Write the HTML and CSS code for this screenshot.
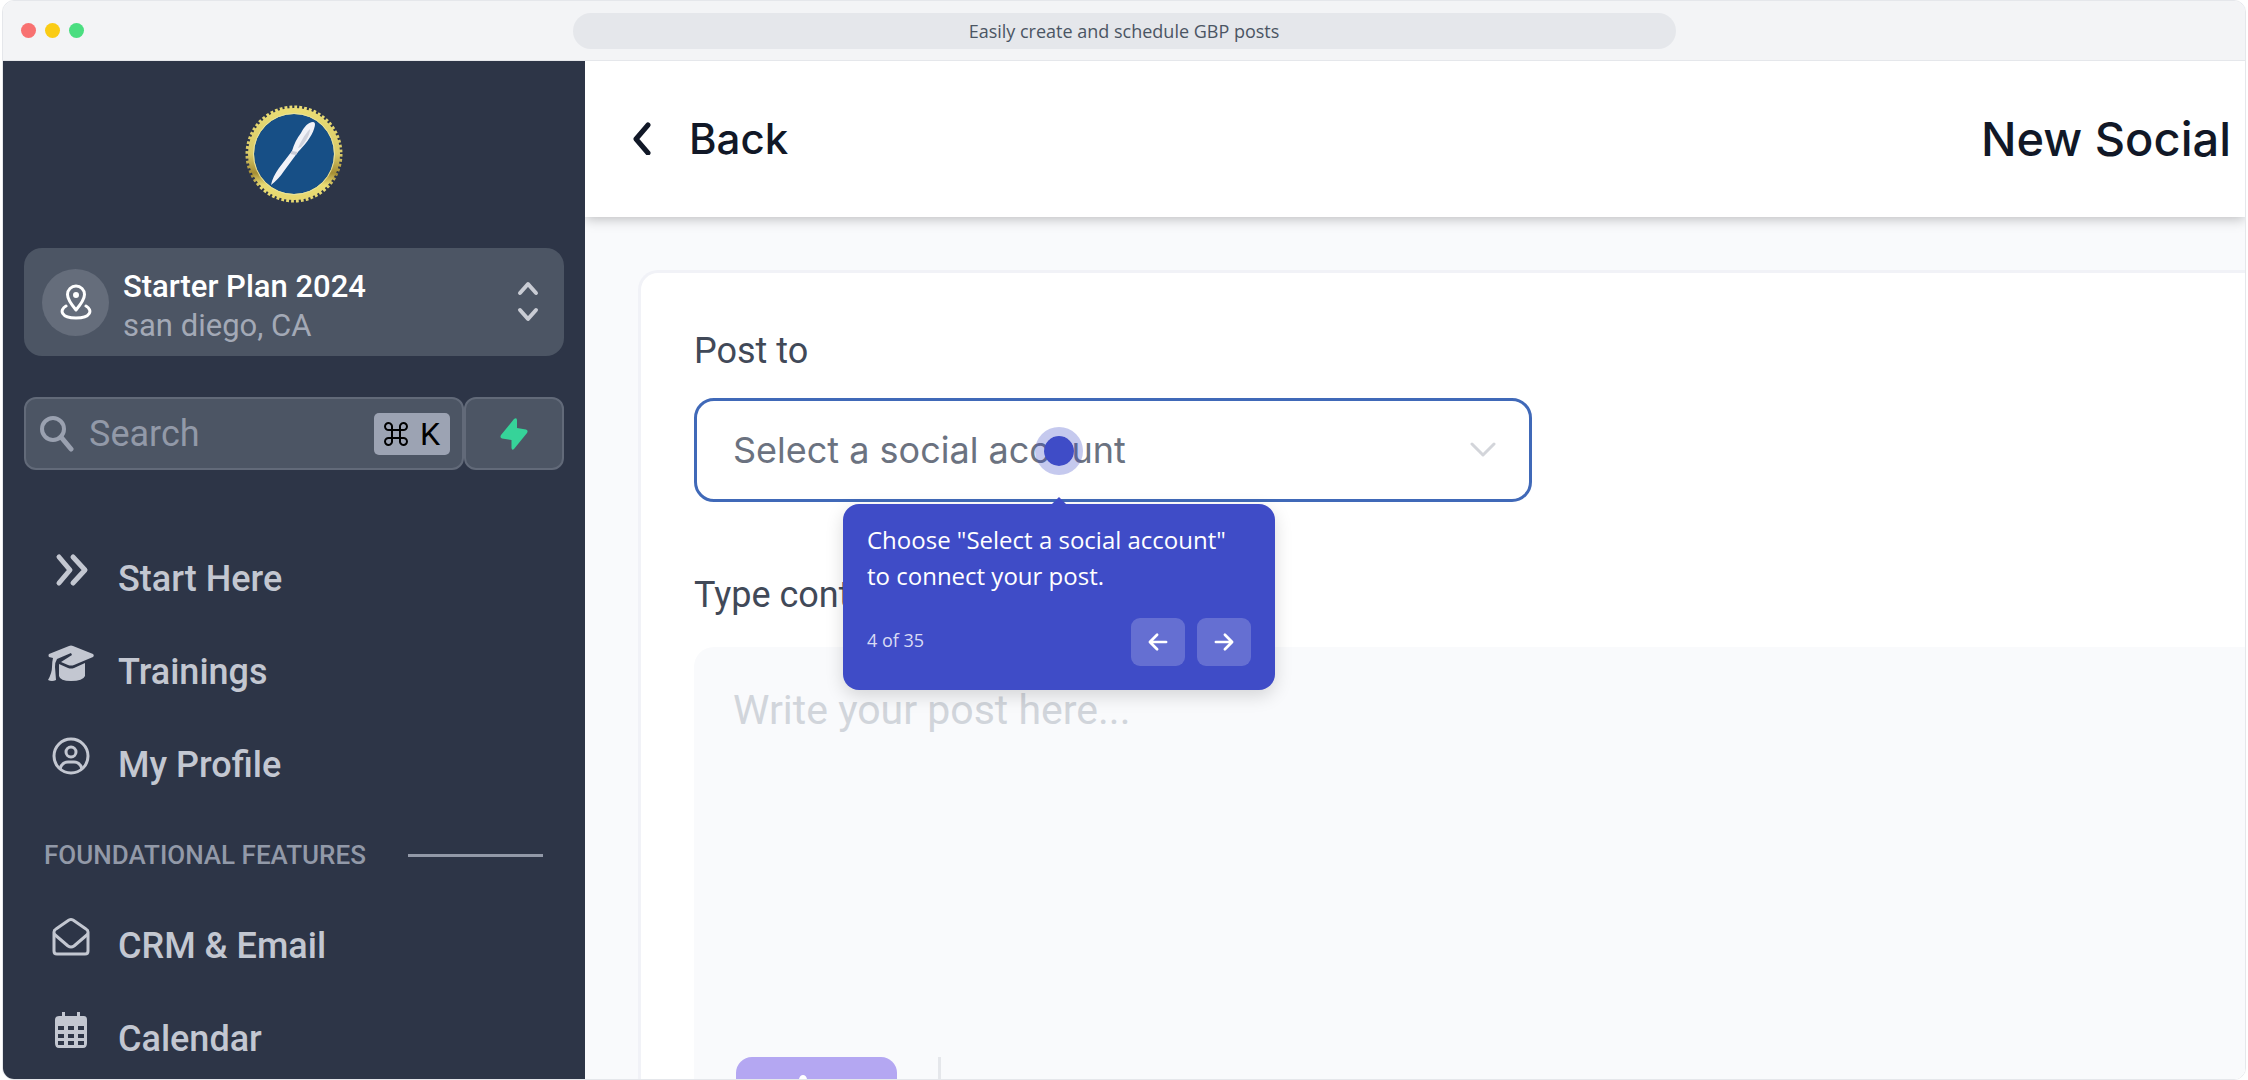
FILE: index.html
```
<!DOCTYPE html>
<html lang="en">
<head>
  <meta charset="UTF-8">
  <meta name="viewport" content="width=device-width, initial-scale=1.0">
  <title>Easily create and schedule GBP posts</title>
  <link rel="stylesheet" href="styles.css">
</head>
<body>
  <div class="window">
    <header class="title-bar">
      <div class="dots">
        <span class="dot dot-red"></span>
        <span class="dot dot-yellow"></span>
        <span class="dot dot-green"></span>
      </div>
      <div class="title-pill">Easily create and schedule GBP posts</div>
    </header>

    <div class="app">
      <aside class="sidebar">
        <svg class="logo" viewBox="0 0 100 100" aria-hidden="true">
          <defs>
            <linearGradient id="gold" x1="0" y1="0" x2="0" y2="1">
              <stop offset="0" stop-color="#e9dc74"/>
              <stop offset="0.5" stop-color="#d9ca68"/>
              <stop offset="0.72" stop-color="#a58d34"/>
              <stop offset="0.86" stop-color="#e9dc74"/>
              <stop offset="1" stop-color="#e6d870"/>
            </linearGradient>
          </defs>
          <circle cx="50" cy="50" r="46.500" fill="none" stroke="url(#gold)" stroke-width="4" stroke-dasharray="2.800 2.069"/>
          <circle cx="50" cy="50" r="43" fill="#174f86" stroke="url(#gold)" stroke-width="6"/>
          <circle cx="50" cy="50" r="40.500" fill="none" stroke="#e8e3a0" stroke-width="1"/>
          <path d="M27 81 C28 75 31 70 35 64 L48 47 C50 40 53 34 57 29 C60 23 64 18 69 18 C72 18 71 22 70 25 C68 32 60 42 54 48 L40 67 C36 73 32 77 27 81Z" fill="#f1f2f8"/>
          <path d="M54 44 C57 38 60 31 66 25 C66 31 62 37 57 43Z" fill="#d0d2dc"/>
          <path d="M48 47 L54 48 L52 51 L46 50Z" fill="#c9cbd6"/>
        </svg>

        <button type="button" class="plan">
          <span class="plan-icon">
            <svg viewBox="0 0 32 36" fill="none" stroke="#fff" stroke-width="3" stroke-linecap="round" stroke-linejoin="round" aria-hidden="true">
              <path d="M16 26 C11 20 7.500 15.500 7.500 10.500 A8.500 8.500 0 0 1 24.500 10.500 C24.500 15.500 21 20 16 26Z"/>
              <circle cx="16" cy="11" r="1.500" fill="#fff"/>
              <path d="M6 22 C-1 26 1 34 16 34 C31 34 33 26 26 22"/>
            </svg>
          </span>
          <span class="plan-text">
            <span class="plan-name">Starter Plan 2024</span>
            <span class="plan-place">san diego, CA</span>
          </span>
          <svg class="plan-arrows" viewBox="0 0 22 44" fill="none" stroke="#c9ccd4" stroke-width="4" stroke-linecap="round" stroke-linejoin="round" aria-hidden="true">
            <path d="M3 13 L11 4 L19 13 M3 30 L11 39 L19 30"/>
          </svg>
        </button>

        <div class="search-row">
          <label class="search">
            <svg class="search-icon" viewBox="0 0 34 38" fill="none" stroke="#9aa1b0" stroke-width="4" stroke-linecap="round" aria-hidden="true">
              <circle cx="13" cy="14" r="11"/>
              <path d="M21 22 L31 34" stroke-width="5"/>
            </svg>
            <input class="search-input" type="text" placeholder="Search" aria-label="Search">
            <kbd class="shortcut">
              <svg class="command-icon" viewBox="0 0 24 24" fill="none" stroke="#000" stroke-width="2" aria-hidden="true">
                <path d="M8 8 H16 V16 H8Z M8 8 H5 A3.500 3.500 0 1 1 8 5Z M16 8 V5 A3.500 3.500 0 1 1 19 8Z M16 16 H19 A3.500 3.500 0 1 1 16 19Z M8 16 V19 A3.500 3.500 0 1 1 5 16Z"/>
              </svg>
              <span>K</span>
            </kbd>
          </label>
          <button type="button" class="quick" aria-label="Quick actions">
            <svg viewBox="0 0 28 32" fill="#36d399" aria-hidden="true">
              <path d="M14 1 Q17 -1 17 2.500 L17 10 L26 11.500 Q28.500 12.500 27 15 L14 31 Q12 33 11.500 30 L11.500 22 L2 20.500 Q-0.500 19.500 1 17Z"/>
            </svg>
          </button>
        </div>

        <nav class="menu">
          <a class="menu-item" href="#">
            <svg viewBox="0 0 46 46" fill="none" stroke="currentColor" stroke-width="5" stroke-linecap="round" stroke-linejoin="round" aria-hidden="true">
              <path d="M11 10 L22 23 L11 36 M25 10 L37 23 L25 36"/>
            </svg>
            <span>Start Here</span>
          </a>
          <a class="menu-item" href="#">
            <svg viewBox="0 0 46 46" fill="currentColor" aria-hidden="true">
              <path d="M1 14 L21 6 Q23 5 25 6 L45 14 Q46.500 15.500 45 17 L26 25 Q23 26 20 25 L13 22 L24 15 L23 13 L9 19 Q7 22 7 27 L8 40 Q4 42 0 40 Q4 33 4 27 Q4 22 5 18 L1 17 Q0 15.500 1 14Z"/>
              <path d="M11 24 L20 28 Q23 29 26 28 L37 23 L37 36 Q35 41 23 41 Q12 41 11 36Z"/>
            </svg>
            <span>Trainings</span>
          </a>
          <a class="menu-item" href="#">
            <svg viewBox="0 0 46 46" fill="none" stroke="currentColor" stroke-width="3" aria-hidden="true">
              <circle cx="23" cy="23" r="17"/>
              <circle cx="23" cy="19" r="5"/>
              <path d="M12 36 Q14 29 20 29 H26 Q32 29 34 36"/>
            </svg>
            <span>My Profile</span>
          </a>
          <h2 class="menu-heading">FOUNDATIONAL FEATURES</h2>
          <a class="menu-item" href="#">
            <svg viewBox="0 0 46 46" fill="none" stroke="currentColor" stroke-width="3" stroke-linejoin="round" aria-hidden="true">
              <path d="M6 18 Q6 16 8 15 L21 6 Q23 5 25 6 L38 15 Q40 16 40 18 V37 Q40 40 37 40 H9 Q6 40 6 37Z"/>
              <path d="M6 20 L20 32 Q23 34 26 32 L40 20"/>
            </svg>
            <span>CRM &amp; Email</span>
          </a>
          <a class="menu-item" href="#">
            <svg viewBox="0 0 46 46" aria-hidden="true">
              <path fill="currentColor" fill-rule="evenodd" d="M14 5 H17 V9 H29 V5 H32 V9 H36 Q39 9 39 13 V36 Q39 41 35 41 H11 Q7 41 7 36 V13 Q7 9 11 9 H14Z M10 19 V23 H16 V19Z M20 19 V23 H26 V19Z M30 19 V23 H36 V19Z M10 27 V31 H16 V27Z M20 27 V31 H26 V27Z M30 27 V31 H36 V27Z M10 34 V38 H16 V34Z M20 34 V38 H26 V34Z M30 34 V38 H36 V34Z"/>
            </svg>
            <span>Calendar</span>
          </a>
        </nav>
      </aside>

      <main class="content">
        <div class="page-header">
          <button type="button" class="back">
            <svg viewBox="0 0 20 34" fill="none" stroke="currentColor" stroke-width="5" stroke-linecap="round" stroke-linejoin="round" aria-hidden="true">
              <path d="M16 4 L4 18 L16 32"/>
            </svg>
            <span>Back</span>
          </button>
          <h1 class="page-title">New Social</h1>
        </div>

        <form class="card">
          <label class="field-label" for="account">Post to</label>
          <div class="select-wrap">
            <select class="account" id="account">
              <option>Select a social account</option>
            </select>
            <svg class="select-arrow" viewBox="0 0 26 18" fill="none" stroke="#d3d5da" stroke-width="3" stroke-linecap="round" stroke-linejoin="round" aria-hidden="true">
              <path d="M2 3 L13 14 L24 3"/>
            </svg>

            <!-- tour step anchored to the select -->
            <div class="tour">
              <span class="hotspot"></span>
              <div class="tooltip">
                <p class="tooltip-text">Choose "Select a social account" to connect your post.</p>
                <div class="tooltip-footer">
                  <span class="step">4 of 35</span>
                  <button type="button" class="step-button" aria-label="Previous">
                    <svg viewBox="0 0 20 20" aria-hidden="true"><path d="M19 10 H2 M9 2 L1 10 L9 18"/></svg>
                  </button>
                  <button type="button" class="step-button" aria-label="Next">
                    <svg viewBox="0 0 20 20" aria-hidden="true"><path d="M1 10 H18 M11 2 L19 10 L11 18"/></svg>
                  </button>
                </div>
              </div>
            </div>
          </div>

          <label class="field-label" for="post">Type content</label>
          <div class="editor">
            <textarea class="post" id="post" placeholder="Write your post here..."></textarea>
            <div class="toolbar">
              <button type="button" class="generate" aria-label="Generate">
                <svg viewBox="0 0 32 32" fill="#fff" aria-hidden="true"><path d="M16 0 Q19 0 20 4 Q22 10 28 12 Q32 14 32 16 Q32 18 28 20 Q22 22 20 28 Q19 32 16 32 Q13 32 12 28 Q10 22 4 20 Q0 18 0 16 Q0 14 4 12 Q10 10 12 4 Q13 0 16 0Z"/></svg>
              </button>
              <span class="divider"></span>
            </div>
          </div>
        </form>
      </main>
    </div>
  </div>
</body>
</html>
```
FILE: styles.css
```
* {
  box-sizing: border-box;
}

body {
  margin: 0;
  height: 100vh;
  padding: 0 2px;
  overflow: hidden;
  background: #fff;
  font-family: "Open Sans", "Noto Sans", sans-serif;
}

button,
input,
select,
textarea {
  font: inherit;
  border: 0;
  margin: 0;
}

.window {
  display: flex;
  flex-direction: column;
  height: 100%;
  border: 1px solid #e5e7eb;
  border-radius: 12px;
  overflow: hidden;
}

/* Title bar */
.title-bar {
  display: grid;
  grid-template-columns: 1fr 2fr 1fr;
  align-items: center;
  height: 60px;
  padding: 0 18px;
  background: #f3f4f6;
  border-bottom: 1px solid #e5e7eb;
  flex-shrink: 0;
}

.dots {
  display: flex;
  gap: 9px;
}

.dot {
  width: 15px;
  height: 15px;
  border-radius: 50%;
}

.dot-red {
  background: #f87171;
}

.dot-yellow {
  background: #facc15;
}

.dot-green {
  background: #4ade80;
}

.title-pill {
  height: 36px;
  line-height: 36px;
  border-radius: 18px;
  background: #e5e7eb;
  color: #4b5563;
  font-size: 18px;
  text-align: center;
}

.app {
  display: flex;
  flex: 1;
  min-height: 0;
}

/* Sidebar */
.sidebar {
  width: 582px;
  flex-shrink: 0;
  padding: 43px 21px 0;
  background: #2d3547;
  font-family: Roboto, sans-serif;
  overflow: hidden;
}

.logo {
  display: block;
  width: 100px;
  height: 100px;
  margin: 0 auto 44px;
}

.plan {
  display: flex;
  align-items: center;
  width: 100%;
  height: 108px;
  padding: 0 25px 0 18px;
  border-radius: 18px;
  background: #4c5564;
  text-align: left;
}

.plan-icon {
  display: flex;
  align-items: center;
  justify-content: center;
  width: 67px;
  height: 67px;
  margin-right: 14px;
  border-radius: 50%;
  background: #656d7b;
}

.plan-icon svg {
  width: 32px;
  height: 36px;
}

.plan-text {
  display: flex;
  flex: 1;
  flex-direction: column;
  padding-top: 8px;
  font-size: 31px;
  line-height: 39px;
}

.plan-name {
  color: #fff;
  font-weight: 500;
}

.plan-place {
  color: #a3a9b6;
}

.plan-arrows {
  width: 22px;
  height: 44px;
}

.search-row {
  display: flex;
  height: 73px;
  margin-top: 41px;
}

.search {
  display: flex;
  flex: 1;
  align-items: center;
  min-width: 0;
  padding: 0 12px 0 14px;
  border: 2px solid #626a79;
  border-radius: 12px;
  background: #4c5564;
}

.search-icon {
  width: 34px;
  height: 38px;
}

.search-input {
  flex: 1;
  min-width: 0;
  padding: 0 0 0 15px;
  background: none;
  color: #fff;
  font-size: 36px;
}

.search-input::placeholder {
  color: #9299a8;
}

.shortcut {
  display: flex;
  align-items: center;
  justify-content: center;
  gap: 12px;
  width: 76px;
  height: 42px;
  border-radius: 5px;
  background: #9ca3b3;
  color: #000;
  font-family: inherit;
  font-size: 32px;
}

.command-icon {
  width: 24px;
  height: 24px;
}

.quick {
  display: flex;
  align-items: center;
  justify-content: center;
  width: 100px;
  border: 2px solid #626a79;
  border-radius: 12px;
  background: #4c5564;
}

.quick svg {
  width: 28px;
  height: 32px;
}

.menu {
  padding: 62px 21px 0 20px;
}

.menu-item {
  display: flex;
  align-items: center;
  gap: 24px;
  height: 93px;
  padding-left: 4px;
  color: #c3c7d1;
  font-size: 36px;
  font-weight: 500;
  text-decoration: none;
}

.menu-item svg {
  width: 46px;
  height: 46px;
  margin-bottom: 17px;
}

.menu-heading {
  display: flex;
  align-items: center;
  gap: 42px;
  height: 88px;
  margin: 0;
  color: #9299a8;
  font-size: 26px;
  font-weight: 500;
}

.menu-heading::after {
  content: "";
  flex: 1;
  height: 3px;
  background: #9299a8;
}

/* Content */
.content {
  display: flex;
  flex: 1;
  flex-direction: column;
  min-width: 0;
  background: #f9fafc;
  font-family: Inter, sans-serif;
  overflow: hidden;
}

.page-header {
  display: flex;
  align-items: center;
  justify-content: space-between;
  height: 156px;
  padding: 0 14px 2px 47px;
  background: #fff;
  color: #111827;
  box-shadow: 0 2px 12px rgba(0, 0, 0, 0.25);
  flex-shrink: 0;
}

.back {
  display: flex;
  align-items: center;
  gap: 37px;
  padding: 0;
  background: none;
  color: inherit;
  font-size: 42px;
  font-weight: 500;
}

.back svg {
  width: 20px;
  height: 34px;
}

.page-title {
  margin: 0;
  font-size: 47px;
  font-weight: 500;
}

.card {
  display: flex;
  flex: 1;
  flex-direction: column;
  min-height: 0;
  margin: 53px 0 0 53px;
  padding: 54px 0 0 53px;
  border: 3px solid #f1f2f7;
  border-width: 3px 0 0 3px;
  border-radius: 20px 0 0 0;
  background: #fff;
}

.field-label {
  color: #414958;
  font-family: Roboto, sans-serif;
  font-size: 36px;
  line-height: 48px;
}

.select-wrap {
  position: relative;
  width: 838px;
  max-width: 100%;
  margin: 23px 0 69px;
}

.account {
  display: block;
  width: 100%;
  height: 104px;
  padding: 0 36px;
  border: 3px solid #4069b8;
  border-radius: 20px;
  appearance: none;
  background: #fff;
  color: #6b7280;
  font-size: 36px;
}

.select-arrow {
  position: absolute;
  top: 43px;
  right: 36px;
  width: 26px;
  height: 18px;
  pointer-events: none;
}

.editor {
  display: flex;
  flex: 1;
  flex-direction: column;
  min-height: 0;
  margin-top: 28px;
  border-radius: 20px 0 0 0;
  background: #f9fafc;
}

.post {
  display: block;
  width: 100%;
  height: 410px;
  flex-shrink: 0;
  padding: 39px;
  background: none;
  resize: none;
  font-family: Roboto, sans-serif;
  font-size: 41px;
  line-height: 48px;
}

.post::placeholder {
  color: #d1d5db;
}

.toolbar {
  display: flex;
  gap: 41px;
  padding-left: 42px;
}

.generate {
  width: 161px;
  height: 68px;
  padding: 0;
  border-radius: 16px;
  background: #b4a7f2;
}

.generate svg {
  display: block;
  width: 32px;
  height: 32px;
  margin-left: 51px;
}

.divider {
  width: 3px;
  height: 68px;
  background: #e5e7eb;
}

/* Tour step */
.tour {
  position: absolute;
  top: 29px;
  left: 149px;
  width: 432px;
}

.hotspot {
  display: block;
  width: 48px;
  height: 48px;
  margin: 0 auto 29px;
  border: 9px solid rgba(63, 76, 199, 0.3);
  border-radius: 50%;
  background: #3f4cc7;
  background-clip: padding-box;
}

.tooltip {
  position: relative;
  padding: 18px 24px 24px;
  border-radius: 16px;
  background: #3f4cc7;
  color: #fff;
  font-family: "Open Sans", "Noto Sans", sans-serif;
  box-shadow: 0 6px 18px rgba(0, 0, 0, 0.15);
}

.tooltip::before {
  content: "";
  position: absolute;
  bottom: 100%;
  left: 50%;
  margin-left: -7px;
  border: 7px solid transparent;
  border-top: 0;
  border-bottom-color: #3f4cc7;
}

.tooltip-text {
  margin: 0 0 24px;
  font-size: 24px;
  line-height: 36px;
}

.tooltip-footer {
  display: flex;
  align-items: center;
  gap: 12px;
}

.step {
  flex: 1;
  padding-bottom: 4px;
  font-size: 18px;
  color: #d9dbf4;
}

.step-button {
  display: flex;
  align-items: center;
  justify-content: center;
  width: 54px;
  height: 48px;
  border-radius: 9px;
  background: rgba(255, 255, 255, 0.2);
}

.step-button svg {
  width: 18px;
  height: 18px;
  flex-shrink: 0;
  overflow: visible;
  fill: none;
  stroke: #fff;
  stroke-width: 3;
  stroke-linecap: round;
  stroke-linejoin: round;
}
```
